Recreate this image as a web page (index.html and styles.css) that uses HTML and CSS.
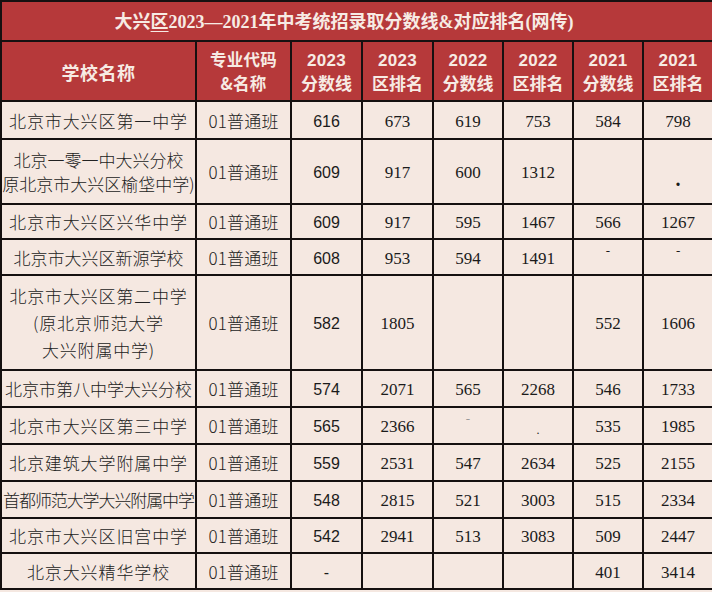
FILE: index.html
```html
<!DOCTYPE html>
<html lang="zh">
<head>
<meta charset="utf-8">
<link rel="stylesheet" href="styles.css">
</head>
<body>
<table class="grid">
  <colgroup>
    <col class="c-name"><col class="c-code"><col class="c-a"><col class="c-a"><col class="c-b"><col class="c-b"><col class="c-b"><col class="c-b">
  </colgroup>
  <thead>
    <tr class="h-title"><th colspan="8" class="title">大兴<u>区</u>2023—2021年中考统招录取分数线&amp;对应排名(网传)</th></tr>
    <tr class="h-head">
      <th class="one">学校名称</th>
      <th class="code">专业代码<br>&amp;名称</th>
      <th><span class="yr">2023</span><br>分数线</th>
      <th><span class="yr">2023</span><br>区排名</th>
      <th><span class="yr">2022</span><br>分数线</th>
      <th><span class="yr">2022</span><br>区排名</th>
      <th><span class="yr">2021</span><br>分数线</th>
      <th><span class="yr">2021</span><br>区排名</th>
    </tr>
  </thead>
  <tbody>
    <tr class="r38"><td class="nm sp">北京市大兴区第一中学</td><td class="cd">01普通班</td><td class="sn">616</td><td>673</td><td>619</td><td>753</td><td>584</td><td>798</td></tr>
    <tr class="r65"><td class="nm two">北京一零一中大兴分校<br>原北京市大兴区榆垡中学)</td><td class="cd">01普通班</td><td class="sn">609</td><td>917</td><td>600</td><td>1312</td><td></td><td><span class="dot low">.</span></td></tr>
    <tr class="r35"><td class="nm sp">北京市大兴区兴华中学</td><td class="cd">01普通班</td><td class="sn">609</td><td>917</td><td>595</td><td>1467</td><td>566</td><td>1267</td></tr>
    <tr class="r36"><td class="nm">北京市大兴区新源学校</td><td class="cd">01普通班</td><td class="sn">608</td><td>953</td><td>594</td><td>1491</td><td><span class="dash high">-</span></td><td><span class="dash high">-</span></td></tr>
    <tr class="r95"><td class="nm three">北京市大兴区第二中学<br>(原北京师范大学<br>大兴附属中学)</td><td class="cd">01普通班</td><td class="sn">582</td><td>1805</td><td></td><td></td><td>552</td><td>1606</td></tr>
    <tr class="r37"><td class="nm">北京市第八中学大兴分校</td><td class="cd">01普通班</td><td class="sn">574</td><td>2071</td><td>565</td><td>2268</td><td>546</td><td>1733</td></tr>
    <tr class="r37"><td class="nm sp">北京市大兴区第三中学</td><td class="cd">01普通班</td><td class="sn">565</td><td>2366</td><td><span class="dash high gray">-</span></td><td><span class="tiny">.</span></td><td>535</td><td>1985</td></tr>
    <tr class="r37"><td class="nm sp">北京建筑大学附属中学</td><td class="cd">01普通班</td><td class="sn">559</td><td>2531</td><td>547</td><td>2634</td><td>525</td><td>2155</td></tr>
    <tr class="r37"><td class="nm tight">首都师范大学大兴附属中学</td><td class="cd">01普通班</td><td class="sn">548</td><td>2815</td><td>521</td><td>3003</td><td>515</td><td>2334</td></tr>
    <tr class="r35"><td class="nm sp">北京市大兴区旧宫中学</td><td class="cd">01普通班</td><td class="sn">542</td><td>2941</td><td>513</td><td>3083</td><td>509</td><td>2447</td></tr>
    <tr class="r36"><td class="nm sp">北京大兴精华学校</td><td class="cd">01普通班</td><td class="sn">-</td><td></td><td></td><td></td><td>401</td><td>3414</td></tr>
  </tbody>
</table>
</body>
</html>
```

FILE: styles.css
```css
html, body {
  margin: 0;
  padding: 0;
  background: #f5e8e1;
  overflow: hidden;
}

.grid {
  border-collapse: collapse;
  table-layout: fixed;
  width: 714px;
  margin-top: 0;
  color: #1b1b1b;
  font-family: "Noto Sans CJK SC", "Liberation Serif", serif;
  font-size: 17px;
}

.c-name { width: 195px; }
.c-code { width: 95px; }
.c-a { width: 71px; }
.c-b { width: 70px; }

.grid th,
.grid td {
  border: 2px solid #151010;
  padding: 0;
  text-align: center;
  vertical-align: middle;
  overflow: hidden;
  white-space: nowrap;
}

.grid thead th {
  background: #b6393a;
  color: #f7ebe4;
  font-weight: bold;
  line-height: 22px;
  font-size: 17px;
}

.grid thead th.code {
  font-size: 16.5px;
  line-height: 24px;
  letter-spacing: 0.3px;
}

.h-title { height: 40px; }
.h-head { height: 60px; }

.grid th.title {
  font-weight: 600;
  font-size: 18px;
  font-family: "Liberation Serif", "Noto Sans CJK SC", serif;
  padding-right: 26px;
  padding-top: 1px;
}

.grid th.title u {
  text-underline-offset: 3px;
  text-decoration-thickness: 1px;
}

.grid th.one {
  font-size: 18px;
  letter-spacing: 0.5px;
  padding-top: 2px;
}

.yr {
  font-family: "Liberation Sans", sans-serif;
  font-weight: bold;
  font-size: 17px;
  letter-spacing: 0.3px;
}

.grid tbody td {
  background: #f5e8e1;
  font-family: "Liberation Serif", "Noto Sans CJK SC", serif;
  font-size: 17px;
  padding-top: 3px;
}

.grid tbody td.nm {
  font-family: "Noto Sans CJK SC", sans-serif;
  font-size: 17px;
  font-weight: 300;
  color: #222;
  padding-top: 0;
}

.grid tbody td.sp { letter-spacing: 0.9px; }
.grid tbody td.tight { letter-spacing: -1.1px; }
.grid tbody td.two { line-height: 24px; letter-spacing: 0; }
.grid tbody td.three { line-height: 27px; letter-spacing: 0.8px; }

.grid tbody td.cd {
  font-family: "Noto Sans CJK SC", sans-serif;
  font-weight: 300;
  color: #222;
  letter-spacing: 0.2px;
  padding-top: 0;
}

.grid tbody td.sn {
  font-family: "Liberation Sans", sans-serif;
  font-size: 16px;
}

.r35 { height: 35px; }
.r36 { height: 36px; }
.r37 { height: 37px; }
.r38 { height: 38px; }
.r65 { height: 65px; }
.r95 { height: 95px; }

.dash {
  display: inline-block;
  font-size: 13px;
}
.high { position: relative; top: -9px; }
.gray { color: #999; }
.dot {
  font-weight: bold;
  font-size: 20px;
}
.low { position: relative; top: 6px; }
.tiny {
  font-size: 12px;
  position: relative;
  top: 2px;
}
```
